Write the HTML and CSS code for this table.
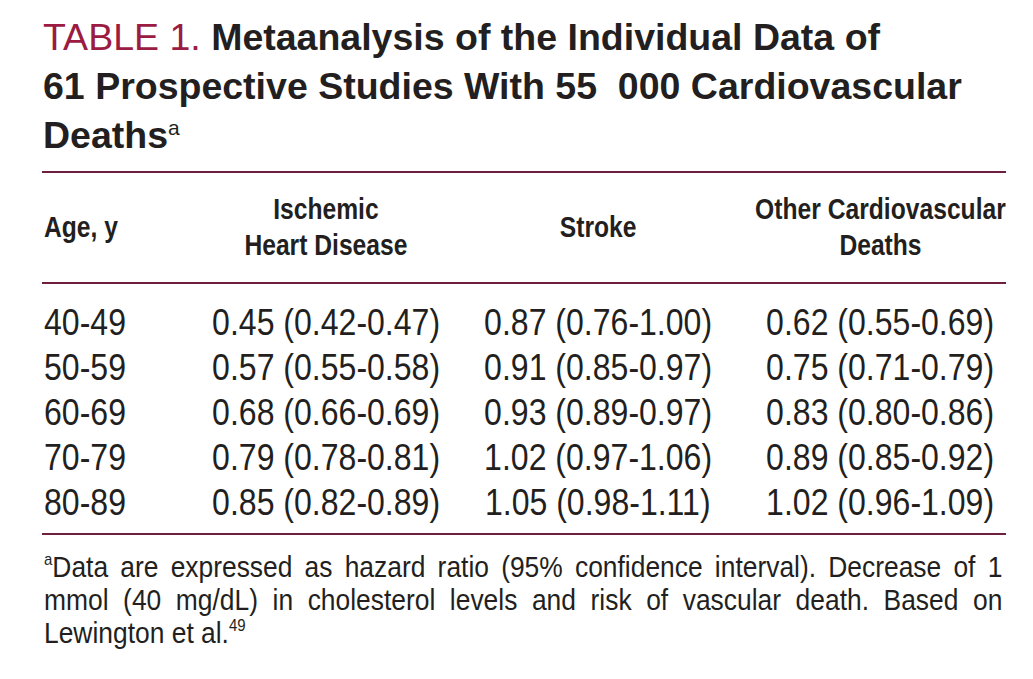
FILE: index.html
```html
<!DOCTYPE html>
<html lang="en">
<head>
<meta charset="utf-8">
<title>Table 1</title>
<link rel="stylesheet" href="styles.css">
</head>
<body>
<div class="page">
  <h1 class="title"><span class="label">TABLE 1.</span> Metaanalysis of the Individual Data of<br>61 Prospective Studies With 55&nbsp;&nbsp;000 Cardiovascular<br>Deaths<sup class="tsup">a</sup></h1>
  <div class="table">
    <div class="row head">
      <div class="cell c1"><span class="txt">Age, y</span></div>
      <div class="cell c2"><span class="txt">Ischemic<br>Heart Disease</span></div>
      <div class="cell c3"><span class="txt">Stroke</span></div>
      <div class="cell c4"><span class="txt">Other Cardiovascular<br>Deaths</span></div>
    </div>
    <div class="body">
      <div class="row"><div class="cell c1"><span class="txt">40-49</span></div><div class="cell c2"><span class="txt">0.45 (0.42-0.47)</span></div><div class="cell c3"><span class="txt">0.87 (0.76-1.00)</span></div><div class="cell c4"><span class="txt">0.62 (0.55-0.69)</span></div></div>
      <div class="row"><div class="cell c1"><span class="txt">50-59</span></div><div class="cell c2"><span class="txt">0.57 (0.55-0.58)</span></div><div class="cell c3"><span class="txt">0.91 (0.85-0.97)</span></div><div class="cell c4"><span class="txt">0.75 (0.71-0.79)</span></div></div>
      <div class="row"><div class="cell c1"><span class="txt">60-69</span></div><div class="cell c2"><span class="txt">0.68 (0.66-0.69)</span></div><div class="cell c3"><span class="txt">0.93 (0.89-0.97)</span></div><div class="cell c4"><span class="txt">0.83 (0.80-0.86)</span></div></div>
      <div class="row"><div class="cell c1"><span class="txt">70-79</span></div><div class="cell c2"><span class="txt">0.79 (0.78-0.81)</span></div><div class="cell c3"><span class="txt">1.02 (0.97-1.06)</span></div><div class="cell c4"><span class="txt">0.89 (0.85-0.92)</span></div></div>
      <div class="row"><div class="cell c1"><span class="txt">80-89</span></div><div class="cell c2"><span class="txt">0.85 (0.82-0.89)</span></div><div class="cell c3"><span class="txt">1.05 (0.98-1.11)</span></div><div class="cell c4"><span class="txt">1.02 (0.96-1.09)</span></div></div>
    </div>
  </div>
  <div class="note">
    <span class="line"><sup class="nsup">a</sup>Data are expressed as hazard ratio (95% confidence interval). Decrease of 1</span>
    <span class="line">mmol (40 mg/dL) in cholesterol levels and risk of vascular death. Based on</span>
    <span class="line last">Lewington et al.<sup class="nsup">49</sup></span>
  </div>
</div>
</body>
</html>
```

FILE: styles.css
```css
html, body {
  margin: 0;
  padding: 0;
  background: #ffffff;
}

body {
  color: #231f20;
  font-family: "Liberation Sans", Arial, sans-serif;
}

.page {
  width: 964px;
  padding: 13px 27px 0 42px;
}

.title {
  margin: 0 0 11px 0;
  font-size: 37.5px;
  line-height: 49px;
  font-weight: bold;
  color: #231f20;
  padding-left: 1px;
}

.label {
  font-weight: normal;
  color: #9b1b42;
}

.tsup {
  font-size: 21px;
  font-weight: normal;
  vertical-align: 13px;
  line-height: 0;
}

.table {
  border-top: 2px solid #6d1f3d;
  border-bottom: 2px solid #6d1f3d;
}

.row {
  display: grid;
  grid-template-columns: 142px 284px 260px 1fr;
}

.head {
  padding: 18px 0 19px;
  border-bottom: 2px solid #6d1f3d;
  font-weight: bold;
  font-size: 29px;
  line-height: 36px;
  align-items: center;
}

.body {
  padding: 16px 0 8px;
  font-size: 36px;
  line-height: 45px;
}

.cell {
  display: flex;
  justify-content: center;
  text-align: center;
  white-space: nowrap;
}

.txt {
  display: inline-block;
  margin: 0 -40px;
  transform: scaleX(0.89);
  transform-origin: center;
}

.head .txt {
  transform: scaleX(0.85);
}

.c1 {
  justify-content: flex-start;
  text-align: left;
  padding-left: 2px;
}

.c1 .txt,
.head .c1 .txt {
  margin: 0;
  transform-origin: left center;
}

.c4 {
  padding-left: 27px;
}

.note {
  margin-top: 15px;
  font-size: 30px;
  line-height: 33px;
  padding-left: 2px;
  overflow: hidden;
}

.line {
  display: block;
  width: 1089px;
  transform: scaleX(0.88);
  transform-origin: left center;
  text-align: justify;
  text-align-last: justify;
  white-space: nowrap;
}

.line.last {
  text-align-last: left;
}

.nsup {
  font-size: 17px;
  vertical-align: 12px;
  line-height: 0;
}
```
